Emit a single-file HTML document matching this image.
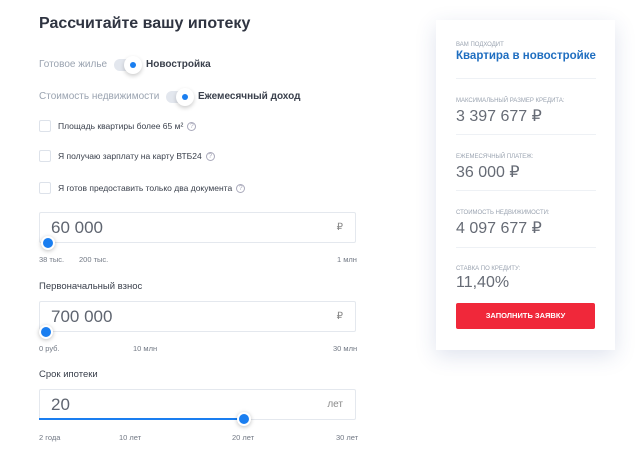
<!DOCTYPE html><html><head><meta charset="utf-8"><style>
*{box-sizing:border-box;margin:0;padding:0}
body{width:640px;height:454px;background:#fff;font-family:"Liberation Sans",sans-serif;position:relative;overflow:hidden;color:#2f3441}
.a{position:absolute;white-space:nowrap}
.tg{position:absolute;width:26px;height:12px;border-radius:6px;background:#e3e7ee}
.tg i{position:absolute;right:-2px;top:-3px;width:18px;height:18px;border-radius:50%;background:#fff;box-shadow:0 2px 4px rgba(0,0,0,.2)}
.tg i:after{content:"";position:absolute;left:6px;top:6px;width:6px;height:6px;border-radius:50%;background:#1a7ef0}
.cb{position:absolute;left:39px;width:12px;height:12px;border:1px solid #dde2ea;border-radius:2px}
.q{display:inline-block;width:9px;height:9px;border:1px solid #aab;border-radius:50%;font-size:7px;line-height:7px;text-align:center;color:#aab;margin-left:4px;vertical-align:1px}
.box{position:absolute;left:39px;width:317px;height:31px;border:1px solid #e4e8ee;border-radius:2px}
.box span{position:absolute;left:11px;top:5px;font-size:17px;color:#5f6570}
.box b{position:absolute;right:12px;top:9px;font-size:10px;font-weight:normal;color:#888}
.th{position:absolute;width:14px;height:14px;border-radius:50%;background:#1a7ef0;border:2px solid #fff;box-shadow:0 1px 4px rgba(0,0,0,.25)}
.sm{font-size:7.5px;color:#727985}
.card{position:absolute;left:436px;top:20px;width:179px;height:330px;background:#fff;box-shadow:0 6px 20px rgba(40,70,140,.15)}
.lb{position:absolute;left:20px;font-size:6px;color:#9aa3b0;text-transform:uppercase}
.vl{position:absolute;left:20px;font-size:16px;color:#666b75}
.hr{position:absolute;left:20px;width:140px;height:1px;background:#eef1f5}
</style></head><body>
<div class="a" style="left:39px;top:15px;font-size:16px;font-weight:bold">Рассчитайте вашу ипотеку</div>
<div class="a" style="left:39px;top:59px;font-size:10px;color:#9aa3b0">Готовое жилье</div>
<div class="tg" style="left:114px;top:59px"><i></i></div>
<div class="a" style="left:146px;top:59px;font-size:10px;font-weight:bold;color:#3a404c">Новостройка</div>
<div class="a" style="left:39px;top:91px;font-size:10px;color:#9aa3b0">Стоимость недвижимости</div>
<div class="tg" style="left:166px;top:91px"><i></i></div>
<div class="a" style="left:198px;top:91px;font-size:10px;font-weight:bold;color:#3a404c">Ежемесячный доход</div>
<div class="cb" style="top:120px"></div><div class="a" style="left:58px;top:121px;font-size:8.5px;color:#3a404c">Площадь квартиры более 65 м²<span class="q">?</span></div>
<div class="cb" style="top:150px"></div><div class="a" style="left:58px;top:151px;font-size:8.5px;color:#3a404c">Я получаю зарплату на карту ВТБ24<span class="q">?</span></div>
<div class="cb" style="top:182px"></div><div class="a" style="left:58px;top:183px;font-size:8.5px;color:#3a404c">Я готов предоставить только два документа<span class="q">?</span></div>
<div class="box" style="top:212px"><span>60 000</span><b>₽</b></div>
<div class="th" style="left:41px;top:236px"></div>
<div class="a sm" style="left:39px;top:255px">38 тыс.</div><div class="a sm" style="left:79px;top:255px">200 тыс.</div><div class="a sm" style="left:337px;top:255px">1 млн</div>
<div class="a" style="left:39px;top:281px;font-size:9.5px;color:#3a404c">Первоначальный взнос</div>
<div class="box" style="top:301px"><span>700 000</span><b>₽</b></div>
<div class="th" style="left:39px;top:325px"></div>
<div class="a sm" style="left:39px;top:344px">0 руб.</div><div class="a sm" style="left:133px;top:344px">10 млн</div><div class="a sm" style="left:333px;top:344px">30 млн</div>
<div class="a" style="left:39px;top:369px;font-size:9.5px;color:#3a404c">Срок ипотеки</div>
<div class="box" style="top:389px"><span>20</span><b>лет</b></div>
<div class="a" style="left:39px;top:418px;width:205px;height:2px;background:#1a7ef0"></div>
<div class="th" style="left:237px;top:412px"></div>
<div class="a sm" style="left:39px;top:433px">2 года</div><div class="a sm" style="left:119px;top:433px">10 лет</div><div class="a sm" style="left:232px;top:433px">20 лет</div><div class="a sm" style="left:336px;top:433px">30 лет</div>
<div class="card">
<div class="lb" style="top:22px">Вам подходит</div>
<div class="a" style="left:20px;top:30px;font-size:11.5px;font-weight:bold;color:#1f6ec0">Квартира в новостройке</div>
<div class="hr" style="top:58px"></div>
<div class="lb" style="top:78px">Максимальный размер кредита:</div>
<div class="vl" style="top:86px">3 397 677 ₽</div>
<div class="hr" style="top:114px"></div>
<div class="lb" style="top:134px">Ежемесячный платеж:</div>
<div class="vl" style="top:142px">36 000 ₽</div>
<div class="hr" style="top:170px"></div>
<div class="lb" style="top:190px">Стоимость недвижимости:</div>
<div class="vl" style="top:198px">4 097 677 ₽</div>
<div class="hr" style="top:227px"></div>
<div class="lb" style="top:246px">Ставка по кредиту:</div>
<div class="vl" style="top:254px">11,40%</div>
<div class="a" style="left:20px;top:283px;width:139px;height:26px;background:#f0283a;border-radius:2px;color:#fff;font-size:7.5px;font-weight:bold;text-align:center;line-height:26px">ЗАПОЛНИТЬ ЗАЯВКУ</div>
</div>
</body></html>
